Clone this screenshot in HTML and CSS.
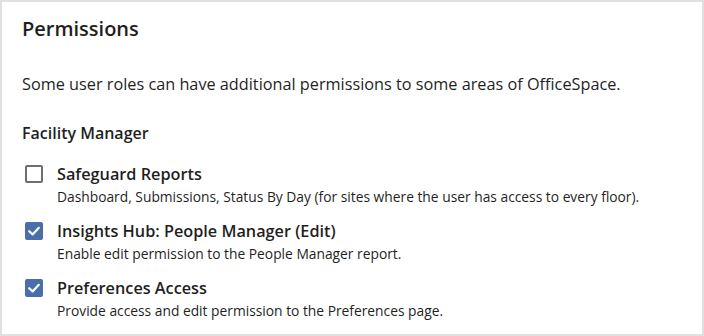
FILE: index.html
```html
<!DOCTYPE html>
<html>
<head>
<meta charset="utf-8">
<link rel="stylesheet" href="styles.css">
</head>
<body>
<div class="panel">
  <h2 class="title">Permissions</h2>
  <p class="intro">Some user roles can have additional permissions to some areas of OfficeSpace.</p>
  <h3 class="role">Facility Manager</h3>
  <ul class="list">
    <li class="item">
      <span class="box"></span>
      <div class="text">
        <div class="name">Safeguard Reports</div>
        <div class="desc">Dashboard, Submissions, Status By Day (for sites where the user has access to every floor).</div>
      </div>
    </li>
    <li class="item">
      <span class="box checked"><svg viewBox="0 0 18 18" width="18" height="18"><path d="M4.2 9.2 L7.6 12.4 L13.8 5.8" fill="none" stroke="#fff" stroke-width="2.2" stroke-linecap="round" stroke-linejoin="round"/></svg></span>
      <div class="text">
        <div class="name">Insights Hub: People Manager (Edit)</div>
        <div class="desc">Enable edit permission to the People Manager report.</div>
      </div>
    </li>
    <li class="item">
      <span class="box checked"><svg viewBox="0 0 18 18" width="18" height="18"><path d="M4.2 9.2 L7.6 12.4 L13.8 5.8" fill="none" stroke="#fff" stroke-width="2.2" stroke-linecap="round" stroke-linejoin="round"/></svg></span>
      <div class="text">
        <div class="name">Preferences Access</div>
        <div class="desc">Provide access and edit permission to the Preferences page.</div>
      </div>
    </li>
  </ul>
</div>
</body>
</html>
```
FILE: styles.css
```css
* { box-sizing: border-box; }
html, body { margin: 0; padding: 0; background: #fff; }
body { font-family: "Open Sans", "Noto Sans", sans-serif; color: #1f1f1f; }
.panel {
  width: 704px;
  height: 336px;
  border: 2px solid #e1dfe1;
  padding: 13px 20px 0 20px;
}
.title {
  margin: 0;
  font-size: 20px;
  font-weight: 600;
  line-height: 28px;
}
.intro {
  margin: 29px 0 0 0;
  font-size: 16.25px;
  line-height: 24px;
}
.role {
  margin: 25px 0 0 0;
  font-size: 16px;
  font-weight: 600;
  line-height: 24px;
}
.list { list-style: none; margin: 17px 0 0 0; padding: 0; display: flex; flex-direction: column; gap: 11px; }
.item { display: flex; align-items: flex-start; gap: 14px; }
.box {
  width: 18px; height: 18px; margin: 3px 0 0 3px;
  border: 2px solid #6e6e6e; border-radius: 2px;
  flex: none; display: block; position: relative;
}
.box.checked { background: #4a6ea9; border-color: #4a6ea9; }
.box svg { position: absolute; left: -2px; top: -2px; }
.name { font-size: 16.25px; font-weight: 600; line-height: 24px; }
.desc { font-size: 13.8px; line-height: 22px; }
```
